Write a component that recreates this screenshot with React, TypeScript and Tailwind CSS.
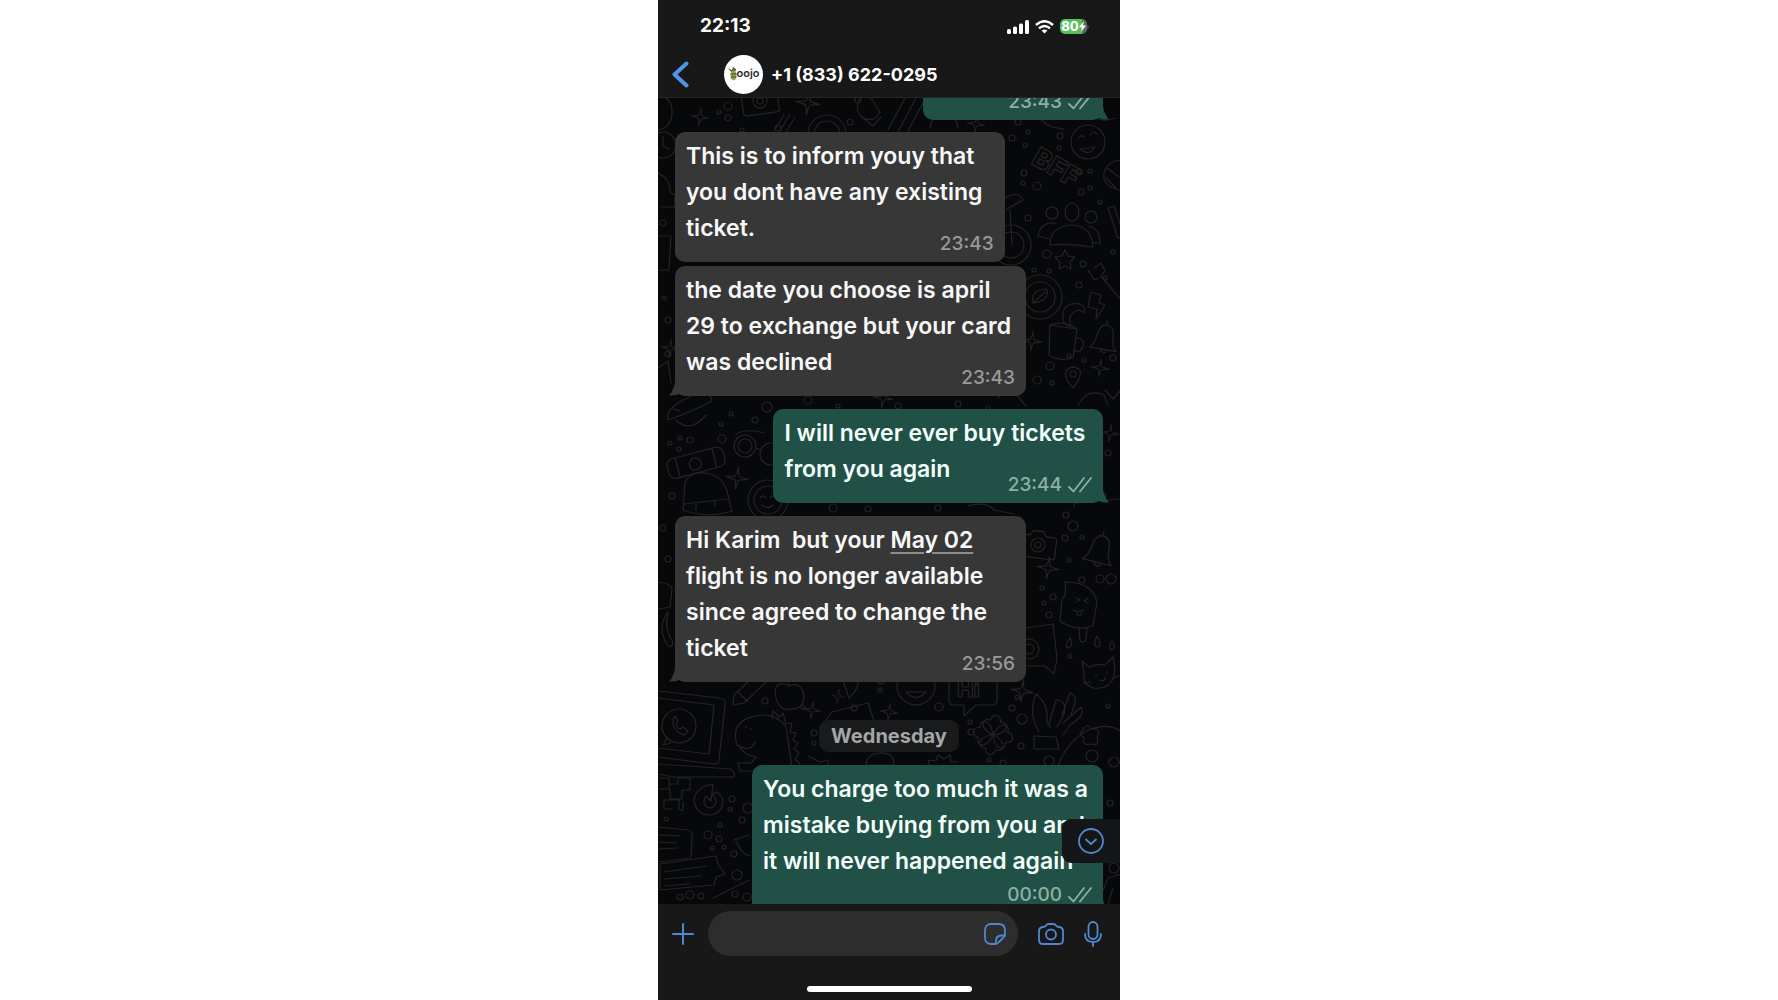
import type { ReactNode } from "react";

type MessageProps = {
  mine?: boolean;
  tail?: boolean;
  wide?: boolean;
  timeBelow?: boolean;
  time: string;
  className?: string;
  children?: ReactNode;
};

const sparkles = [
  [42, 19, 8], [150, 5, 11], [374, 243, 9], [442, 270, 8], [79, 380, 10],
  [390, 470, 10], [154, 612, 8], [231, 614, 8], [364, 593, 10], [318, 26, 8],
  [12, 250, 8], [225, 300, 9], [452, 335, 8], [180, 598, 6],
];

const dots = [
  [70, 8, 4], [61, 14, 2], [70, 20, 3], [84, 32, 2], [120, 30, 3], [192, 24, 3],
  [200, 2, 3], [360, 24, 3], [370, 34, 2], [354, 40, 3], [367, 47, 2], [402, 38, 3],
  [401, 50, 2], [366, 75, 3], [365, 85, 2], [379, 88, 4], [421, 74, 3], [432, 73, 2],
  [423, 94, 3], [432, 90, 2], [442, 104, 2], [370, 120, 3], [389, 156, 4], [425, 166, 3],
  [376, 172, 2], [391, 173, 2], [421, 187, 3], [455, 154, 2], [447, 180, 2], [392, 268, 4],
  [379, 282, 4], [426, 262, 2], [455, 260, 3], [394, 285, 2], [411, 258, 2], [5, 125, 3],
  [10, 222, 3], [6, 200, 2], [10, 256, 3], [12, 345, 2], [22, 340, 2], [21, 351, 2],
  [32, 342, 3], [64, 341, 4], [63, 326, 2], [73, 316, 2], [97, 322, 3], [109, 309, 5],
  [14, 398, 3], [5, 430, 3], [10, 461, 3], [408, 417, 3], [415, 428, 5], [424, 439, 2],
  [407, 440, 3], [411, 462, 2], [424, 482, 3], [442, 481, 4], [453, 481, 5], [384, 490, 2],
  [395, 499, 3], [386, 505, 2], [391, 517, 3], [412, 558, 2], [445, 398, 3], [450, 355, 3],
  [107, 603, 3], [145, 609, 2], [156, 635, 3], [156, 645, 2], [313, 634, 3], [312, 624, 2],
  [359, 599, 2], [354, 610, 3], [364, 621, 5], [363, 648, 3], [331, 662, 2], [345, 665, 3],
  [74, 701, 3], [90, 710, 5], [72, 711, 2], [84, 722, 3], [62, 727, 2], [50, 737, 4],
  [61, 741, 3], [54, 750, 2], [76, 756, 3], [66, 749, 2], [79, 777, 5], [77, 796, 3],
  [89, 799, 4], [22, 799, 3], [32, 797, 4], [43, 798, 3], [8, 721, 2], [434, 658, 6],
  [456, 664, 5], [452, 705, 3], [456, 770, 5], [391, 663, 5], [450, 608, 2], [196, 610, 3],
  [222, 592, 2], [223, 583, 3], [281, 609, 4], [240, 308, 3], [150, 302, 4], [180, 308, 2],
  [280, 410, 3], [210, 411, 3], [300, 306, 3], [330, 310, 2], [175, 410, 4], [90, 580, 2],
];

const camera = "M-16 -9h7l3-5h10l3 5h8q3 0 3 3v16q0 3-3 3h-30q-3 0-3-3v-16q0-3 3-3z";
const bell = "M-14 11q5-4 6-14q2-11 9-10t7 12q0 9 5 13zM-3 12q3 6 7 0M0 -13v-4";
const leaf = "M0 0q-11-3-12-10q1-5 7-4q0-5 5-6q5 1 5 6q6-1 7 4q-1 7-12 10z";

function Wallpaper() {
  return (
    <svg
      aria-hidden="true"
      className="absolute inset-0 h-full w-full"
      viewBox="0 0 462 806"
      preserveAspectRatio="xMidYMin slice"
      fill="none"
      stroke="#242426"
      strokeWidth="1.2"
      strokeLinecap="round"
      strokeLinejoin="round"
    >
      {sparkles.map(([x, y, s]) => (
        <path
          key={`${x}-${y}`}
          transform={`translate(${x} ${y}) rotate(8) scale(${s / 10})`}
          d="M0 -11q1 8 2 9q2 1 9 2q-7 1-9 2q-1 1-2 9q-1-8-2-9q-2-1-9-2q7-1 9-2q1-1 2-9z"
        />
      ))}
      {dots.map(([x, y, r]) => (
        <circle key={`${x}-${y}`} cx={x} cy={y} r={r} />
      ))}

      {/* top strip */}
      <path d="M0 -3q15 3 14 18t-14 17" />
      <g transform="translate(102 3) rotate(-8)">
        <path d={camera} />
        <circle r="7" />
        <circle r="3" />
      </g>
      <circle cx="169" cy="36" r="19" />
      <circle cx="169" cy="36" r="13" />
      <path d="M116 33l10-16M122 33l10-17M128 34l9-15" />
      <path d="M203 -2q-8 14 2 22q12 5 17-6l-9-14M205 20l10 8l8-9" />
      <path d="M230 32l17-32M240 34l19-36M250 33l16-30" />
      <path d="M272 30q2-14 14-14t14 14" />
      <path d="M425 5q-22 4-33-5M430 12q10 15 27 8M380 18q8 12 26 13" />

      {/* faces */}
      <circle cx="5" cy="47" r="13" />
      <path d="M5 38v10l6 3" />
      <circle cx="430" cy="44" r="17" />
      <path d="M420 41q2-5 6-2M432 37q3-5 7-1M422 51q9 8 15-2q-8 2-15 2z" />
      <circle cx="110" cy="402" r="20" />
      <circle cx="110" cy="402" r="14" />
      <path d="M102 400q3-4 6 0M112 400q3-4 6 0M104 407q6 5 11 0" />
      <circle cx="258" cy="588" r="19" />
      <path d="M250 584q3-4 6 0M262 584q3-4 6 0M248 594q10 11 20 0z" />
      <text x="372" y="65" transform="rotate(30 372 65)" fontSize="27" fontWeight="800" fontFamily="Inter, sans-serif">
        BFF
      </text>
      <path d="M462 62q-14 2-16 14t16 16M449 70l12 9M448 80l10 10" />

      {/* people */}
      <ellipse cx="414" cy="114" rx="7" ry="9" />
      <path d="M392 147q0-19 22-20q20 1 21 22q-22-4-43-2z" />
      <circle cx="394" cy="115" r="6" />
      <circle cx="433" cy="119" r="6" />
      <path d="M398 125q-16-1-18 13l11 3M430 128q12 2 12 17h-7" />
      <circle cx="353" cy="147" r="20" />
      <circle cx="353" cy="147" r="13" />
      <path d="M347 100q14-8 18 2l-16 9M352 112l2 34" />
      <path d="M407 152l3 6l7 1l-5 5l1 7l-6-3l-6 3l1-7l-5-5l7-1z" />
      <path d="M450 110l6-2l10 30l-6 2zM436 170l7-5l4 8l-4 5l20 24M441 180l-5 2l-6-10" />
      <circle cx="382" cy="199" r="22" />
      <circle cx="382" cy="199" r="15" />
      <path d="M375 205q-3-13 14-14q3 12-14 14zl12-11" />
      <path d="M421 206q-15-2-16 10t8 12q-5-12 8-16l5 3q2-7-5-9z" />
      <path d="M433 194l10 3l-2 8l6 2l-9 14l1-10l-9-2z" />
      <path d="M392 227l27 4l-4 29q-14 4-24-3zM392 227q13-5 27 4M418 240q9 0 7 8t-10 4" />
      <path transform="translate(447 240) rotate(8)" d={bell} />
      <path d="M415 290q-11-12-6-18t13 0q2 7-7 18zM447 292l8 9l14-16" />
      <circle cx="415" cy="276" r="3" />

      {/* left side */}
      <path d="M0 75q13 6 12 20l5 2v12h-14M0 138h13l-2 34h-11M0 270l10-7l3 22" />
      <path d="M10 322q-2-10 12-18l18-10q12-1 14 9q-16 9-44 19zM18 322q14 14 30-5M22 313l-7-2" />
      <g transform="rotate(-15 37 365)">
        <rect x="9" y="355" width="58" height="20" rx="7" />
        <path d="M19 355v20M57 355v20" />
        <circle cx="37" cy="366" r="6" />
      </g>
      <circle cx="87" cy="348" r="11" />
      <circle cx="87" cy="348" r="7" />
      <circle cx="113" cy="356" r="11" />
      <path d="M78 336q12-6 28-1M98 350l4 2" />
      <path d="M25 412l2-28q8-13 24-8q13 2 18 17l5 20q-24 8-49-1zM38 406v6M57 402v6M26 406l44-5" />
      <path d="M0 484q14 2 14 7l-2 18l-12 2M10 514q-12 16 0 34q6 2 4-6q-8-10-4-28z" />
      <path d="M310 408q18-5 26 4l20 4M340 300q8-10 18-4l10 12M420 307q9-17 26-10l4 10M418 405l44-4M418 395l-2 14" />

      {/* right side */}
      <g transform="translate(380 447) rotate(7)">
        <path d={camera} />
        <circle r="7" />
        <circle r="3" />
      </g>
      <path transform="translate(442 452) rotate(12) scale(1.1)" d={bell} />
      <path d="M407 484q28 0 32 20l-4 24q-17 6-33-5l2-22q5-3 3-17zM421 529l1 14q5 3 6-2l1-11" />
      <path d="M418 500l4 2l-4 2M430 500l-4 3l4 2M415 512q5 3 11 0M419 515q1 6 5 0" />
      <path d="M412 540q-6 8-2 10q6-1 2-10zM439 538q-5 9 0 11q6-1 0-11zM454 543q-5 8 0 9q5-2 0-9z" />
      <path d="M424 563l7 6q9-4 16-2l8-8q3 12 1 20q-5 13-20 11q-12-3-10-16zM438 576v2M449 573v2M441 582l4 1l3-3M432 584l-7 1M454 580l7-2" />
      <path d="M368 530l27-4l4 35l-3 15l-9-8h-20" />
      <circle cx="371" cy="551" r="10" />
      <circle cx="371" cy="551" r="5" />

      {/* bottom area */}
      <path d="M0 593l62 7q6 1 5 7l-6 55q-1 5-6 4l-55-7M0 600l56 7l-5 49l-51-6M0 666l72 5q5 2 4 8h-60l-16-3" />
      <circle cx="21" cy="628" r="17" />
      <path d="M9 640l-4 7l8-2M15 621q-1 12 11 16l4-4l-5-4l-3 2q-4-2-4-5l2-3l-3-5z" />
      <path d="M76 597l22-21l10 8l-22 21l-11 2zM80 594l9 9" />
      <path d="M131 588q-13-7-14 7q3 19 15 16q14 1 14-14q-3-14-15-9zq-2-7 5-9" />
      <path d="M183 577l16 2q4 10-8 21zM168 622l6-8l36-9l6 18" />
      <path d="M291 575h48v27q0 5-5 5h-16l-12 11v-11h-10q-5 0-5-5z" />
      <text x="299" y="599" fontSize="22" fontWeight="800" fontFamily="Inter, sans-serif">
        Hi
      </text>
      <path d="M381 634q-11-18-3-38q13 10 11 29l4 5M391 626l7-24q11 0 8 14l-7 13M404 617l8-22q10 2 1 21M405 625l18-16q5 8-11 18l-7 10M376 638l22 1l3 12h-25z" />
      <g transform="translate(335 637) rotate(10)">
        <path d={leaf} />
        <path transform="rotate(90)" d={leaf} />
        <path transform="rotate(180)" d={leaf} />
        <path transform="rotate(270)" d={leaf} />
      </g>
      <path d="M79 647q-6-20 11-27q26-9 38 9l6 40M79 647q14 8 18-3M81 647q4 10 17 12l-5 6h-13l2 8h14M114 620l1-7l7 6l3-4l3 11l6-1l-2 9l6 1l-3 7l5 3l-4 6l5 4l-4 6l5 5" />
      <path d="M88 628v2M93 630v2M150 658l12 6l8-2q1 10-6 14M208 668q0-12 14-13t14 12h-28M272 668l-2-6l8 1l2-6l6 4l6-4l1 7h7" />
      <path d="M400 668q9-25 32-37q20-6 30 2M425 632q4-8 9-1q10-1 5 8q3 10-6 7q-10 2-7-6q-6-4-1-8z" />
      <path d="M1 680h10v11h-10M11 686h9v-6h12v12h-8v9h-12v-10M5 702h16v10h4v-8M6 702v9h8" />
      <path d="M47 688q-11 5-11 15q3 14 16 14q13-2 13-15q-2-6-7-8l-4 3q5 3 4 8q-3 7-9 4q-6-4-1-11l5 5l2-17z" />
      <path d="M0 729l30 3q5 1 4 8l-1 20l-33 4M0 737l22 1M0 744l18 1M0 751l20-1" />
      <path d="M2 766l56-8l2 8l7 10l-9 3l-2 8l-54 5zM6 774l42-6M6 781l37-3M6 788l25-2M55 800l36-18M76 742l15-5M78 743q6 14 14 15" />
      <path d="M441 802l9-22l20-6M450 806l5-16" />
    </svg>
  );
}

function Ticks() {
  return (
    <svg aria-hidden="true" className="h-4 w-6" viewBox="0 0 24 16" fill="none" stroke="currentColor" strokeWidth="1.800" strokeLinecap="round">
      <path d="M1 10L5.500 14.500L16 1M12 14.500L23 1" />
    </svg>
  );
}

function Message({ mine, tail, wide, timeBelow, time, className = "", children }: MessageProps) {
  return (
    <article
      className={`relative rounded-[10px] px-[11px] py-1.5 ${wide ? "w-[82%]" : "w-[77%]"} ${
        mine ? "self-end bg-[#215046] text-[#f2fffb]" : "self-start bg-[#373737] text-[#f7f7f7]"
      } ${className}`}
    >
      {children && <p className="whitespace-pre text-[23px] leading-9 font-semibold">{children}</p>}
      <div
        className={`flex h-6 items-center justify-end gap-1.5 text-[19px] font-medium ${
          timeBelow ? "mt-1" : children ? "-mt-3.5" : ""
        } ${mine ? "text-[#8db0a5]" : "text-[#999999]"}`}
      >
        <time>{time}</time>
        {mine && <Ticks />}
      </div>
      {tail && (
        <svg
          aria-hidden="true"
          className={`absolute bottom-0 h-4 w-4 ${mine ? "-right-1.5 text-[#215046]" : "-left-1.5 -scale-x-100 text-[#373737]"}`}
          viewBox="0 0 16 16"
          fill="currentColor"
        >
          <path d="M2 2H10Q11 10 16 15.500Q10 16 6 14Z" />
        </svg>
      )}
    </article>
  );
}

function StatusBar() {
  return (
    <div className="flex h-[53px] items-center justify-between pr-[31px] pl-[42px]">
      <time className="text-[19px] font-bold text-white">22:13</time>
      <div className="flex items-center gap-1.5">
        <svg aria-label="Signal" className="h-[14px] w-[22px]" viewBox="0 0 22 14" fill="white">
          <rect y="9" width="4" height="5" rx="1.500" />
          <rect x="6" y="6.500" width="4" height="7.500" rx="1.500" />
          <rect x="12" y="3.500" width="4" height="10.500" rx="1.500" />
          <rect x="18" width="4" height="14" rx="1.500" />
        </svg>
        <svg aria-label="Wi-Fi" className="h-[14px] w-[19px]" viewBox="0 0 19 14" fill="none" stroke="white" strokeWidth="2.500">
          <path d="M1 5Q9.500-2.500 18 5M4 8.400Q9.500 3.500 15 8.400" />
          <path d="M6.600 10.600Q9.500 8.400 12.400 10.600L9.500 13.600Z" fill="white" stroke="none" />
        </svg>
        <div className="flex items-center">
          <div className="flex h-[15px] w-[27px] items-center justify-center rounded-[5px] bg-linear-to-r from-[#55c05a] from-80% to-[#5d6b5e] to-80% text-white">
            <span className="text-[13px] font-extrabold">80</span>
            <svg aria-hidden="true" className="h-[11px] w-[7px]" viewBox="0 0 7 11" fill="currentColor">
              <path d="M5 0L0 6.200H3L2 11L7 4.500H4Z" />
            </svg>
          </div>
          <span className="h-1 w-0.5 rounded-r bg-[#3f4a40]" />
        </div>
      </div>
    </div>
  );
}

function Avatar() {
  return (
    <div className="flex h-[39px] w-[39px] items-center justify-center rounded-full bg-white">
      <svg aria-hidden="true" className="h-[14px] w-[9px]" viewBox="0 0 9 14">
        <path d="M0 1L4 3L5 0L8 2L7 6L4 6Z" fill="#59604a" />
        <ellipse cx="5.500" cy="8.500" rx="3" ry="4.800" fill="#a3a548" />
        <path d="M2.500 7h6M3 10h5.500" stroke="#3d4330" strokeWidth="1.200" />
      </svg>
      <span className="pb-0.5 text-[11px] leading-3 font-semibold text-[#2c2c2c]">oojo</span>
    </div>
  );
}

export default function App() {
  return (
    <div className="flex min-h-screen justify-center bg-white font-[Inter,'Liberation_Sans',sans-serif]">
      <main className="flex h-screen w-full max-w-[462px] flex-col overflow-hidden bg-[#181818]">
        {/* Header */}
        <header className="shrink-0 border-b border-[#242424]">
          <StatusBar />
          <div className="flex h-11 items-center pb-0.5 pl-3.5">
            <button type="button" aria-label="Back" className="mr-[35px] text-[#4f96ea]">
              <svg className="h-[27px] w-[17px]" viewBox="0 0 17 27" fill="none" stroke="currentColor" strokeWidth="4" strokeLinecap="round" strokeLinejoin="round">
                <path d="M14.500 2.500L2.500 13.500L14.500 24.500" />
              </svg>
            </button>
            <Avatar />
            <h1 className="ml-2 text-[18px] font-bold text-white">+1 (833) 622-0295</h1>
          </div>
        </header>

        {/* Conversation */}
        <section className="relative min-h-0 flex-1 overflow-hidden bg-[#07080a]">
          <Wallpaper />
          <div className="relative flex flex-col px-[17px]">
            <div className="-mt-3.5 flex flex-col items-end">
              <div className="flex w-[42%] flex-col">
                <Message mine tail time="23:43" className="w-full" />
              </div>
            </div>
            <Message time="23:43" className="mt-3">
              {"This is to inform youy that\nyou dont have any existing\nticket."}
            </Message>
            <Message tail wide time="23:43" className="mt-1">
              {"the date you choose is april\n29 to exchange but your card\nwas declined"}
            </Message>
            <Message mine tail time="23:44" className="mt-[13px]">
              {"I will never ever buy tickets\nfrom you again"}
            </Message>
            <Message tail wide time="23:56" className="mt-[13px]">
              {"Hi Karim  but your "}
              <a href="#may-02" className="underline decoration-[#8d8d8d] decoration-2 underline-offset-4">May 02</a>
              {"\nflight is no longer available\nsince agreed to change the\nticket"}
            </Message>
            <h2 className="mt-[38px] self-center rounded-[9px] bg-[#191a1b] px-3 text-[20px] leading-8 font-bold text-[#a6a6a6]">
              Wednesday
            </h2>
            <Message mine tail wide timeBelow time="00:00" className="mt-[13px]">
              {"You charge too much it was a\nmistake buying from you and\nit will never happened again"}
            </Message>
          </div>
          <button
            type="button"
            aria-label="Scroll to latest"
            className="absolute right-0 bottom-[41px] flex h-11 w-[58px] items-center justify-center rounded-l-[9px] bg-[#151617] text-[#5088cf]"
          >
            <svg className="h-[26px] w-[26px]" viewBox="0 0 26 26" fill="none" stroke="currentColor" strokeWidth="1.800" strokeLinecap="round" strokeLinejoin="round">
              <circle cx="13" cy="13" r="12" />
              <path d="M8 11.500L13 16L18 11.500" />
            </svg>
          </button>
        </section>

        {/* Composer */}
        <footer className="shrink-0 bg-[#181818] pt-[7px] pb-2 text-[#5088cf]">
          <form className="flex items-center pr-[18px] pl-3.5" onSubmit={(e) => e.preventDefault()}>
            <button type="button" aria-label="Attach" className="mr-3.5">
              <svg className="h-[22px] w-[22px]" viewBox="0 0 22 22" fill="none" stroke="currentColor" strokeWidth="2" strokeLinecap="round">
                <path d="M11 1V21M1 11H21" />
              </svg>
            </button>
            <div className="flex h-[45px] min-w-0 flex-1 items-center rounded-full bg-[#2d2d2d] pr-3 pl-4">
              <input aria-label="Message" type="text" className="min-w-0 flex-1 bg-transparent text-[20px] text-white outline-none" />
              <button type="button" aria-label="Stickers">
                <svg className="h-[22px] w-[22px]" viewBox="0 0 22 22" fill="none" stroke="currentColor" strokeWidth="1.800" strokeLinejoin="round">
                  <path d="M12 21H7.500Q1 21 1 14.500V7.500Q1 1 7.500 1H14.500Q21 1 21 7.500V12Q20.500 14 18.500 15.500L15 19Q13.500 20.600 12 21Z" />
                  <path d="M12 21V18Q12 12.500 17.500 12.500H21" />
                </svg>
              </button>
            </div>
            <button type="button" aria-label="Camera" className="ml-5">
              <svg className="h-6 w-[26px]" viewBox="0 0 26 24" fill="none" stroke="currentColor" strokeWidth="1.800" strokeLinejoin="round">
                <path d="M5 5Q7 5 8 3.500Q9 2 11 2H15Q17 2 18 3.500Q19 5 21 5Q25 5.500 25 9V18Q25 22 21 22H5Q1 22 1 18V9Q1 5.500 5 5Z" />
                <circle cx="13" cy="12.500" r="5" />
              </svg>
            </button>
            <button type="button" aria-label="Record voice message" className="ml-5">
              <svg className="h-[26px] w-[18px]" viewBox="0 0 18 26" fill="none" stroke="currentColor" strokeWidth="1.800" strokeLinecap="round">
                <rect x="4.500" y="1" width="9" height="17" rx="4.500" />
                <path d="M1 13Q1 21 9 21Q17 21 17 13M9 21V25" />
              </svg>
            </button>
          </form>
          <div className="mx-auto mt-[30px] h-1.5 w-[165px] rounded-full bg-white" />
        </footer>
      </main>
    </div>
  );
}
